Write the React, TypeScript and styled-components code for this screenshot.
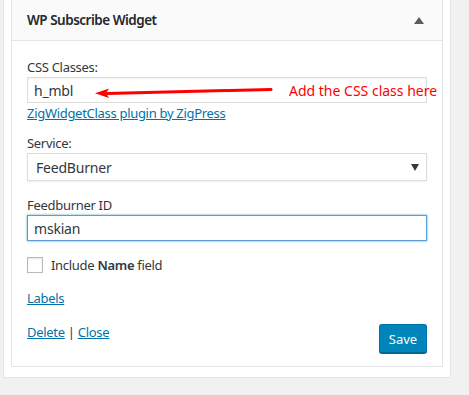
import React from "react";
import styled, { createGlobalStyle } from "styled-components";

const GlobalStyle = createGlobalStyle`
  html, body {
    margin: 0;
    padding: 0;
    background: #f1f1f1;
    font-family: "Noto Sans", "Open Sans", sans-serif;
    color: #32373c;
  }
`;

export default function App() {
  return (
    <>
      <GlobalStyle />
      <Panel>
        <Widget>
          <WidgetHeader>
            <Title>WP Subscribe Widget</Title>
            <svg width="10" height="7" viewBox="0 0 10 7">
              <path d="M5 0 L10 7 L0 7 Z" fill="#555d66" />
            </svg>
          </WidgetHeader>
          <Body>
            <Label>CSS Classes:</Label>
            <FieldWrap>
              <TextInput readOnly value="h_mbl" />
              <Arrow width="180" height="12" viewBox="0 0 180 12">
                <path d="M12 7.5 L176 3.5" stroke="#ff0000" strokeWidth="3" strokeLinecap="round" />
                <path d="M0 7.3 L14 2.5 L11 7.3 L14 12 Z" fill="#ff0000" />
              </Arrow>
              <Note>Add the CSS class here</Note>
            </FieldWrap>
            <LinkLine $top={1}>
              <Link href="#">ZigWidgetClass plugin by ZigPress</Link>
            </LinkLine>

            <Label $top={12}>Service:</Label>
            <Select>
              <span>FeedBurner</span>
              <svg width="8" height="7" viewBox="0 0 8 7">
                <path d="M0 0 L8 0 L4 7 Z" fill="#32373c" />
              </svg>
            </Select>

            <Label $top={15}>Feedburner ID</Label>
            <TextInput readOnly value="mskian" $focused />

            <CheckRow>
              <Checkbox />
              <span>
                Include <b>Name</b> field
              </span>
            </CheckRow>

            <LinkLine $top={15}>
              <Link href="#">Labels</Link>
            </LinkLine>

            <Actions>
              <div>
                <Link href="#">Delete</Link> | <Link href="#">Close</Link>
              </div>
              <SaveButton>Save</SaveButton>
            </Actions>
          </Body>
        </Widget>
      </Panel>
    </>
  );
}

const Panel = styled.div`
  margin-left: 3px;
  width: 448px;
  background: #fff;
  border: 1px solid #e5e5e5;
  border-top: none;
  box-sizing: border-box;
  padding: 0 7px 10px 7px;
`;

const Widget = styled.div`
  width: 432px;
  box-sizing: border-box;
  border: 1px solid #e5e5e5;
  border-top: none;
  background: #fff;
`;

const WidgetHeader = styled.div`
  height: 41px;
  box-sizing: border-box;
  background: #fafafa;
  border-bottom: 1px solid #e5e5e5;
  display: flex;
  align-items: center;
  justify-content: space-between;
  padding: 0 18px 0 15px;
`;

const Title = styled.h3`
  margin: 0;
  font-size: 13.5px;
  font-weight: 600;
  letter-spacing: -0.5px;
  color: #23282d;
`;

const Body = styled.div`
  padding: 17px 15px 13px 15px;
`;

const Label = styled.div<{ $top?: number }>`
  font-size: 13px;
  line-height: 18px;
  letter-spacing: -0.3px;
  margin-top: ${(p) => p.$top ?? 0}px;
  margin-bottom: 1px;
  color: #32373c;
`;

const FieldWrap = styled.div`
  position: relative;
`;

const TextInput = styled.input<{ $focused?: boolean }>`
  display: block;
  width: 400px;
  height: 26px;
  box-sizing: border-box;
  margin: 0;
  padding: 0 6px;
  font-family: inherit;
  font-size: 14px;
  letter-spacing: -0.2px;
  color: #32373c;
  background: #fff;
  border: 1px solid ${(p) => (p.$focused ? "#5b9dd9" : "#ddd")};
  box-shadow: ${(p) =>
    p.$focused ? "0 0 2px rgba(30,140,190,.8)" : "inset 0 1px 2px rgba(0,0,0,.07)"};
  outline: none;
`;

const Arrow = styled.svg`
  position: absolute;
  left: 68px;
  top: 9px;
`;

const Note = styled.span`
  position: absolute;
  left: 262px;
  top: 4px;
  font-size: 14px;
  line-height: 20px;
  color: #ff0000;
  white-space: nowrap;
`;

const Link = styled.a`
  color: #0073aa;
  text-decoration: underline;
`;

const LinkLine = styled.div<{ $top?: number }>`
  margin-top: ${(p) => p.$top ?? 0}px;
  font-size: 13px;
  line-height: 18px;
  letter-spacing: -0.3px;
`;

const Select = styled.div`
  width: 400px;
  height: 28px;
  box-sizing: border-box;
  border: 1px solid #ddd;
  box-shadow: 0 1px 2px rgba(0, 0, 0, 0.07);
  display: flex;
  align-items: center;
  justify-content: space-between;
  padding: 0 7px 0 8px;
  font-size: 14px;
  letter-spacing: -0.2px;
  color: #32373c;
`;

const CheckRow = styled.label`
  display: flex;
  align-items: center;
  gap: 8px;
  margin-top: 15px;
  font-size: 13px;
  line-height: 18px;
  letter-spacing: -0.3px;
  color: #32373c;
  b {
    font-weight: 600;
  }
`;

const Checkbox = styled.span`
  width: 16px;
  height: 16px;
  box-sizing: border-box;
  border: 1px solid #b4b9be;
  background: #fff;
  box-shadow: inset 0 1px 2px rgba(0, 0, 0, 0.1);
`;

const Actions = styled.div`
  margin-top: 16px;
  display: flex;
  justify-content: space-between;
  align-items: flex-start;
  font-size: 13px;
  line-height: 18px;
  letter-spacing: -0.3px;
  color: #32373c;
`;

const SaveButton = styled.button`
  margin-top: 1px;
  width: 48px;
  height: 29px;
  padding: 0;
  background: #0085ba;
  border: 1px solid #0073aa;
  border-bottom-color: #006799;
  border-radius: 3px;
  box-shadow: 0 1px 0 #006799;
  color: #fff;
  font-family: inherit;
  font-size: 13px;
  letter-spacing: 0;
`;
